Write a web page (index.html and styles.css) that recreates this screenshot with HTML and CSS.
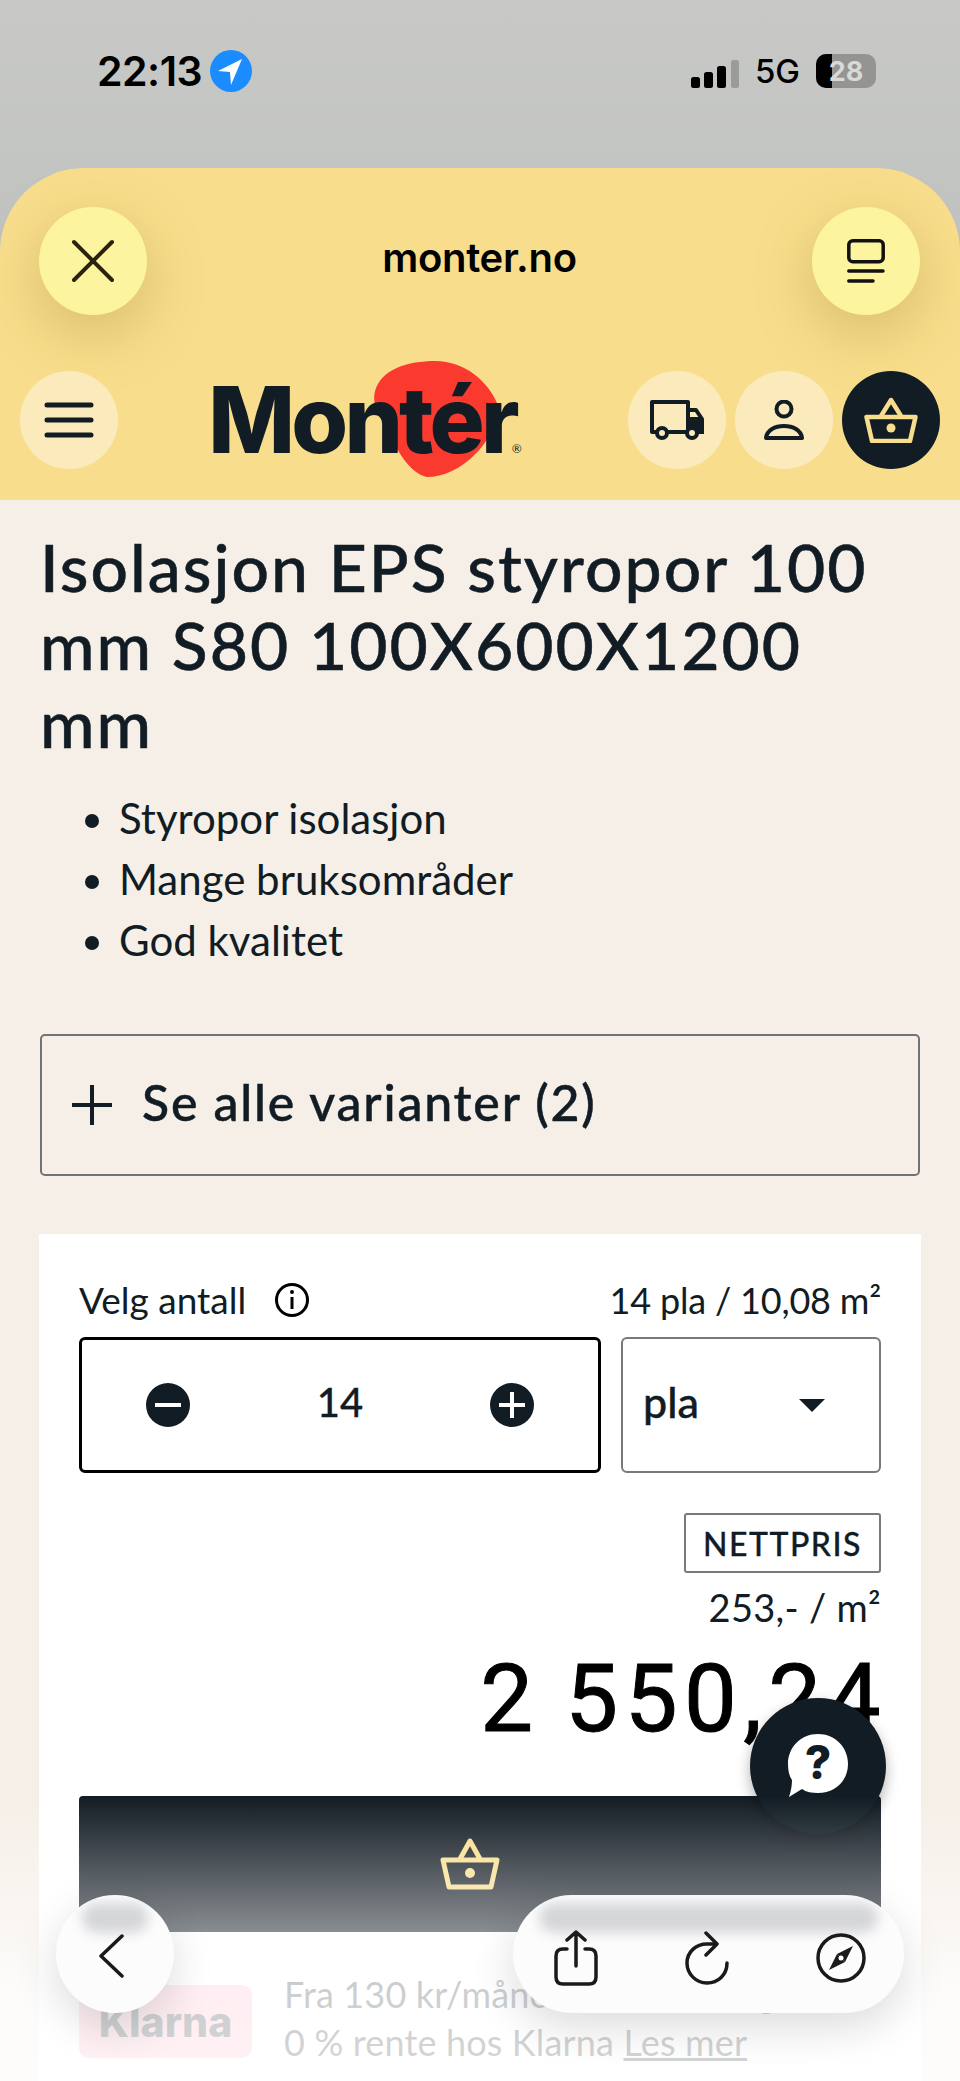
FILE: index.html
```html
<!DOCTYPE html>
<html lang="no">
<head>
  <meta charset="UTF-8">
  <meta name="viewport" content="width=device-width, initial-scale=1.0">
  <title>Isolasjon EPS styropor - monter.no</title>
  <link rel="stylesheet" href="styles.css">
</head>
<body>
  <div class="top">
    <div class="status">
      <div class="status-left">
        <span class="time">22:13</span>
        <span class="location">
          <svg viewBox="0 0 42 42" width="42" height="42"><path d="M32 9 L8 21 L20 22 L21 35 Z" fill="#fff"/></svg>
        </span>
      </div>
      <div class="status-right">
        <svg class="signal" viewBox="0 0 48 28" width="48" height="28"><rect x="0" y="17" width="9" height="11" rx="2.500" fill="#000"/><rect x="13" y="12" width="9" height="16" rx="2.500" fill="#000"/><rect x="26" y="6" width="9" height="22" rx="2.500" fill="#000"/><rect x="40" y="0" width="8" height="28" rx="2.500" fill="#9a9c9a"/></svg>
        <span class="net">5G</span>
        <span class="battery"><span class="battery-level"></span><span class="battery-num">28</span></span>
      </div>
    </div>

    <header class="header">
      <div class="browser-row">
        <button class="round-btn">
          <svg viewBox="0 0 44 44" width="44" height="44"><path d="M3 3 L41 41 M41 3 L3 41" stroke="#2b2210" stroke-width="4" stroke-linecap="round"/></svg>
        </button>
        <span class="domain">monter.no</span>
        <button class="round-btn">
          <svg viewBox="0 0 38 44" width="38" height="44" fill="none" stroke="#111" stroke-width="3.5" stroke-linecap="round"><rect x="1.8" y="1.8" width="34.4" height="21" rx="4"/><path d="M1.8 32 H36 M1.8 42 H26"/></svg>
        </button>
      </div>
      <div class="site-row">
        <button class="site-btn">
          <svg viewBox="0 0 50 38" width="50" height="38"><path d="M3 4 H47 M3 19 H47 M3 34 H47" stroke="#111c24" stroke-width="5" stroke-linecap="round"/></svg>
        </button>
        <div class="logo">
          <svg class="logo-blob" viewBox="0 0 120 116" width="124" height="116" preserveAspectRatio="none"><path d="M2 30 C8 8 34 0 60 0 C90 0 112 22 120 42 C122 60 112 80 100 92 C85 108 68 116 52 116 C36 112 22 90 14 66 C8 52 -2 46 2 30Z" fill="#fb3a2f"/></svg>
          <span class="logo-text">Montér</span><span class="logo-reg">®</span>
        </div>
        <div class="site-actions">
          <button class="site-btn">
            <svg viewBox="0 0 54 40" width="54" height="40" fill="none" stroke="#111c24" stroke-width="4"><path d="M8 32 H2 V2 H38 V32 H17 M38 10 H46 L52 19 V32 H47 M38 32 V19 H52" stroke-linejoin="round"/><path d="M38 21 H52 V32 H38Z" fill="#111c24"/><circle cx="12" cy="33" r="5" fill="#fbeabc"/><circle cx="42" cy="33" r="5" fill="#fbeabc"/></svg>
          </button>
          <button class="site-btn">
            <svg viewBox="0 0 40 40" width="40" height="40" fill="none" stroke="#111c24" stroke-width="4"><circle cx="20" cy="9" r="7.5"/><path d="M2 38 C3 30 11 26 20 26 C29 26 37 30 38 38 Z" stroke-linejoin="round"/></svg>
          </button>
          <button class="site-btn site-btn-dark">
            <svg viewBox="0 0 54 46" width="54" height="46" fill="none" stroke="#f8de8c" stroke-width="4.5" stroke-linejoin="round"><path d="M2.500 20 H51.500 L46 44 H8 Z"/><path d="M17 19 L27 3 L37 19"/><circle cx="27" cy="31" r="4.5" fill="#f8de8c" stroke="none"/></svg>
          </button>
        </div>
      </div>
    </header>
  </div>

  <main class="main">
    <h1 class="title">Isolasjon EPS styropor 100 mm S80 100X600X1200 mm</h1>
    <ul class="points">
      <li>Styropor isolasjon</li>
      <li>Mange bruksområder</li>
      <li>God kvalitet</li>
    </ul>

    <div class="variants">
      <svg viewBox="0 0 40 40" width="40" height="40"><path d="M0 20 H40 M20 0 V40" stroke="#111c24" stroke-width="4"/></svg>
      <span class="variants-text">Se alle varianter (2)</span>
    </div>

    <section class="card">
      <div class="qty-head">
        <div class="qty-label">
          <span>Velg antall</span>
          <svg viewBox="0 0 36 36" width="36" height="36" fill="none" stroke="#000" stroke-width="3"><circle cx="18" cy="18" r="15.5"/><path d="M18 15 V27"/><circle cx="18" cy="10" r="2" fill="#000" stroke="none"/></svg>
        </div>
        <span class="qty-total">14 pla / 10,08 m²</span>
      </div>
      <div class="qty-row">
        <div class="stepper">
          <svg viewBox="0 0 44 44" width="44" height="44"><circle cx="22" cy="22" r="22" fill="#111c24"/><path d="M9 22 H35" stroke="#fff" stroke-width="4"/></svg>
          <span class="stepper-num">14</span>
          <svg viewBox="0 0 44 44" width="44" height="44"><circle cx="22" cy="22" r="22" fill="#111c24"/><path d="M9 22 H35 M22 9 V35" stroke="#fff" stroke-width="4"/></svg>
        </div>
        <div class="unit">
          <span class="unit-name">pla</span>
          <span class="caret"></span>
        </div>
      </div>
      <div class="price-box">
        <span class="tag">NETTPRIS</span>
        <span class="unit-price">253,- / m²</span>
        <span class="price">2 550,24</span>
      </div>
      <button class="buy">
        <svg viewBox="0 0 60 52" width="60" height="52" fill="none" stroke="#f8de8c" stroke-width="5" stroke-linejoin="round"><path d="M3 22 H57 L51 49 H9 Z"/><path d="M20 21 L30 3 L40 21"/><circle cx="30" cy="35" r="5" fill="#f8de8c" stroke="none"/></svg>
      </button>
      <div class="klarna">
        <span class="klarna-badge">Klarna</span>
        <div class="klarna-text">
          <div>Fra 130 kr/måned i 36 mnd. og</div>
          <div>0 % rente hos Klarna <a class="klarna-link">Les mer</a></div>
        </div>
      </div>
    </section>
  </main>

  <button class="chat">
    <svg viewBox="0 0 62 66" width="62" height="66"><path d="M31 1 C48 1 61 14 61 31 C61 48 48 60 31 60 C25 60 19 59 15 56 L2 64 C4 58 5 52 5 47 C2 43 1 37 1 31 C1 14 14 1 31 1 Z" fill="#fff"/><text x="31" y="46" text-anchor="middle" class="chat-mark">?</text></svg>
  </button>

  <div class="veil"></div>

  <div class="toolbar">
    <div class="glass glass-back">
      <span class="glass-smear"></span>
      <svg viewBox="0 0 26 44" width="26" height="44" fill="none" stroke="#1a1a1a" stroke-width="3.5" stroke-linecap="round" stroke-linejoin="round"><path d="M24 2 L3 22 L24 42"/></svg>
    </div>
    <div class="glass glass-tools">
      <span class="glass-smear"></span>
      <svg viewBox="0 0 44 56" width="44" height="56" fill="none" stroke="#1a1a1a" stroke-width="3.5" stroke-linecap="round" stroke-linejoin="round"><path d="M13 19 H9 C4.500 19 2 21.500 2 26 V47 C2 51.500 4.500 54 9 54 H35 C39.500 54 42 51.500 42 47 V26 C42 21.500 39.500 19 35 19 H31"/><path d="M22 36 V2 M13 10 L22 2 L31 10"/></svg>
      <svg viewBox="0 0 44 54" width="44" height="54" fill="none" stroke="#1a1a1a" stroke-width="3.500" stroke-linecap="round" stroke-linejoin="round"><path d="M42 32 C42 44 33 52 22 52 C11 52 2 43 2 32 C2 21 11 13 22 13 H30"/><path d="M21 2 L32 13 L21 24"/></svg>
      <svg viewBox="0 0 50 50" width="50" height="50"><circle cx="25" cy="25" r="23" fill="none" stroke="#1a1a1a" stroke-width="3.500"/><path d="M37 13 L29 29 L21 21 Z" fill="#1a1a1a"/><path d="M13 37 L21 21 L29 29 Z" fill="#1a1a1a"/><circle cx="25" cy="25" r="2.500" fill="#fff"/></svg>
    </div>
  </div>
</body>
</html>
```

FILE: styles.css
```css
* { box-sizing: border-box; }
html, body { margin: 0; padding: 0; }
body { position: relative; width: 960px; height: 2081px; overflow: hidden; background-color: #f5efe7; color: #111c24; font-family: Lato, sans-serif; }
button { border: none; padding: 0; cursor: pointer; display: flex; align-items: center; justify-content: center; }

.top { background: linear-gradient(180deg, #c8c9c7 0%, #b8bcb9 100%); }

/* status bar */
.status { height: 168px; padding: 50px 84px 0 97px; display: flex; justify-content: space-between; align-items: flex-start; font-family: Inter, sans-serif; color: #000; }
.status-left { display: flex; align-items: center; gap: 8px; }
.time { font-size: 41px; font-weight: 600; letter-spacing: -0.5px; line-height: 42px; }
.location { width: 42px; height: 42px; border-radius: 50%; background-color: #1a8cff; display: block; }
.location svg { display: block; }
.status-right { display: flex; align-items: center; gap: 16px; height: 42px; }
.signal { margin-top: 6px; }
.net { font-size: 33px; font-weight: 500; }
.battery { position: relative; width: 60px; height: 34px; border-radius: 10px; background-color: #949593; overflow: hidden; display: flex; align-items: center; justify-content: center; }
.battery-level { position: absolute; left: 0; top: 0; bottom: 0; width: 16px; background-color: #000; }
.battery-num { position: relative; color: #d9d9d7; font-size: 27px; font-weight: 700; }

/* yellow header */
.header { background-color: #f8de8c; border-radius: 84px 84px 0 0; padding: 39px 0 31px; height: 332px; }
.browser-row { display: flex; align-items: center; justify-content: space-between; padding: 0 40px 0 39px; height: 108px; }
.round-btn { width: 108px; height: 108px; border-radius: 50%; background-color: #fdf49f; box-shadow: 0 18px 60px rgba(130, 100, 20, 0.28); }
.domain { font-family: Inter, sans-serif; font-size: 40px; font-weight: 600; color: #000; margin-top: -8px; letter-spacing: -0.3px; }
.site-row { display: flex; align-items: center; justify-content: space-between; padding: 0 20px; margin-top: 56px; height: 98px; }
.site-btn { width: 98px; height: 98px; border-radius: 50%; background-color: #fbeabc; }
.site-btn-dark { background-color: #111c24; }
.site-actions { display: flex; gap: 9px; }

.logo { position: relative; display: flex; align-items: baseline; margin-right: 16px; }
.logo-blob { position: absolute; left: 165px; top: -10px; }
.logo-text { position: relative; font-family: Inter, sans-serif; font-size: 92px; font-weight: 800; letter-spacing: -3.8px; line-height: 98px; color: #111c24; }
.logo-reg { position: relative; font-size: 12px; margin-left: -4px; }

/* product */
.main { padding: 0 40px; }
.title { margin: 0; padding-top: 28px; font-size: 66px; font-weight: 500; line-height: 78px; letter-spacing: 2px; -webkit-text-stroke: 0.5px #111c24; }
.points { margin: 26px 0 0; padding: 0 0 0 79px; font-size: 42px; line-height: 61px; }
.points li::marker { font-size: 42px; }

.variants { height: 142px; margin-top: 63px; border: 2px solid #6f7479; border-radius: 5px; padding-left: 30px; display: flex; align-items: center; gap: 30px; font-size: 50px; font-weight: 500; letter-spacing: 1.8px; -webkit-text-stroke: 0.5px #111c24; }
.variants-text { margin-top: -6px; }

.card { background-color: #fff; margin: 58px -1px 0; padding: 36px 40px 0; height: 847px; }
.qty-head { height: 67px; padding-bottom: 8px; display: flex; align-items: center; justify-content: space-between; font-size: 37px; line-height: 40px; }
.qty-total { font-size: 36px; letter-spacing: -0.2px; }
.qty-label { display: flex; align-items: center; gap: 28px; }
.qty-row { display: flex; gap: 20px; }
.stepper { flex: 1; height: 136px; border: 3px solid #000; border-radius: 6px; padding: 0 64px; display: flex; align-items: center; justify-content: space-between; font-size: 40px; font-weight: 500; -webkit-text-stroke: 0.3px #111c24; }
.stepper-num { margin-top: -6px; }
.unit { width: 260px; height: 136px; border: 2px solid #77797c; border-radius: 6px; padding: 0 54px 0 20px; display: flex; align-items: center; justify-content: space-between; font-size: 43px; font-weight: 500; -webkit-text-stroke: 0.4px #111c24; }
.unit-name { margin-top: -8px; }
.caret { width: 0; height: 0; border-left: 13px solid transparent; border-right: 13px solid transparent; border-top: 13px solid #111c24; }

.price-box { margin-top: 40px; display: flex; flex-direction: column; align-items: flex-end; }
.tag { height: 60px; width: 197px; border: 2px solid #77797c; border-radius: 3px; display: flex; align-items: center; justify-content: center; font-size: 32px; font-weight: 500; letter-spacing: 1.5px; -webkit-text-stroke: 0.3px #111c24; }
.unit-price { margin-top: 11px; font-size: 38px; line-height: 46px; letter-spacing: 0.3px; }
.price { margin-top: 19px; font-family: Roboto, sans-serif; font-size: 94px; font-weight: 400; line-height: 100px; color: #000; letter-spacing: 6.5px; word-spacing: -4px; margin-right: -6px; -webkit-text-stroke: 1px #000; }

.buy { width: 100%; height: 136px; margin-top: 47px; border-radius: 4px; background-color: #131c24; }
.buy svg { margin-right: 20px; }
.klarna { margin-top: 53px; display: flex; gap: 32px; }
.klarna-badge { width: 173px; height: 73px; border-radius: 10px; background-color: #ffb3c7; display: flex; align-items: center; justify-content: center; font-family: Inter, sans-serif; font-size: 41px; font-weight: 800; }
.klarna-text { font-size: 36px; line-height: 48px; margin-top: -15px; letter-spacing: 0.15px; }
.klarna-link { text-decoration: underline; }

/* floating bits */
.chat { position: absolute; left: 750px; top: 1698px; width: 136px; height: 136px; border-radius: 50%; background-color: #111c24; box-shadow: 0 6px 14px rgba(0, 0, 0, 0.3); }
.chat-mark { font-family: Inter, sans-serif; font-size: 46px; font-weight: 800; fill: #111c24; }

.veil { position: absolute; left: 0; top: 1796px; width: 960px; height: 285px; background: linear-gradient(180deg, rgba(255, 255, 255, 0) 0%, rgba(255, 255, 255, 0.5) 48%, rgba(255, 255, 255, 0.78) 66%, rgba(255, 255, 255, 0.82) 100%); pointer-events: none; }

.toolbar { position: absolute; left: 56px; right: 56px; top: 1895px; display: flex; justify-content: space-between; }
.glass { position: relative; height: 118px; background-color: #fcfcfc; border-radius: 59px; box-shadow: 0 14px 44px rgba(0, 0, 0, 0.14); overflow: hidden; display: flex; align-items: center; }
.glass svg { position: relative; }
.glass-back { width: 118px; padding-left: 42px; }
.glass-back svg { margin-top: 4px; }
.glass-tools { width: 391px; padding: 8px 38px 0 41px; justify-content: space-between; }
.glass-smear { position: absolute; left: 26px; right: 26px; top: 8px; height: 30px; border-radius: 15px; background-color: #d5d6d9; filter: blur(6px); }
```
